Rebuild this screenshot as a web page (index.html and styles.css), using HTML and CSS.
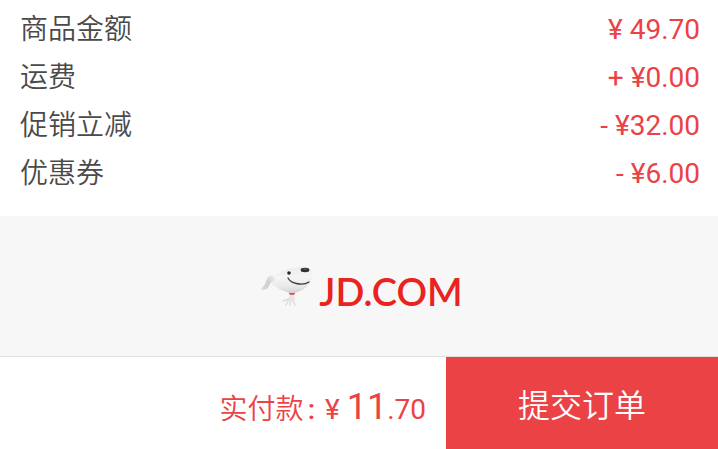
FILE: index.html
```html
<!DOCTYPE html>
<html lang="zh-CN">
<head>
<meta charset="utf-8">
<meta name="viewport" content="width=device-width, initial-scale=1">
<title>结算</title>
<link rel="stylesheet" href="styles.css">
</head>
<body>
<dl class="summary">
  <div class="row"><dt>商品金额</dt><dd>¥ 49.70</dd></div>
  <div class="row"><dt>运费</dt><dd>+ ¥0.00</dd></div>
  <div class="row"><dt>促销立减</dt><dd>- ¥32.00</dd></div>
  <div class="row"><dt>优惠券</dt><dd>- ¥6.00</dd></div>
</dl>
<div class="brand">
  <svg class="dog" viewBox="0 0 56 42" aria-hidden="true">
    <defs>
      <linearGradient id="body" x1="0.4" y1="0" x2="0.45" y2="1">
        <stop offset="0" stop-color="#ececec"/>
        <stop offset="0.4" stop-color="#f5f5f5"/>
        <stop offset="0.75" stop-color="#e9e9e9"/>
        <stop offset="1" stop-color="#d2d2d2"/>
      </linearGradient>
      <linearGradient id="ear" x1="1" y1="0" x2="0" y2="1">
        <stop offset="0" stop-color="#ececec"/>
        <stop offset="0.5" stop-color="#d0d0d0"/>
        <stop offset="1" stop-color="#d8d8d8"/>
      </linearGradient>
    </defs>
    <path d="M35 33L34 35L28 37M34 35L31 41M38 33L38 36L40 41M36 35L35 41" fill="none" stroke="#dcdcdc" stroke-width="1.4" stroke-linecap="round"/>
    <path d="M35 30H39L40 36H34Z" fill="#e5e5e5"/>
    <path d="M14 13C20 12 25 7 33 5C41 3 46 3 51 3C57 4 59 9 57 15C54 23 46 28 38 29C28 29 20 22 14 17Z" fill="url(#body)"/>
    <path d="M18 12C15 11 13 12 12 15C11 19 9 22 6 25C9 27 13 25 14 22C15 19 17 17 20 16Z" fill="url(#ear)"/>
    <ellipse cx="50" cy="6" rx="4.4" ry="2.2" fill="#303030"/>
    <ellipse cx="50" cy="5" rx="2.4" ry="0.4" fill="#777777"/>
    <circle cx="34" cy="9" r="1.8" fill="#262626"/>
    <path d="M33 14C36 20 48 22 54 18" fill="none" stroke="#383838" stroke-width="1.3" stroke-linecap="round"/>
    <path d="M34 28.5Q37 29.5 40 28.5L39.5 30.5Q37 31 34.5 30.5Z" fill="#df4448"/>
  </svg>
  <span class="wordmark">JD.COM</span>
</div>
<footer class="checkout">
  <p class="total">实付款<span class="colon">:</span><span class="price">¥ <span class="whole">11</span>.70</span></p>
  <button class="submit" type="button">提交订单</button>
</footer>
</body>
</html>
```
FILE: styles.css
```css
* {
  box-sizing: border-box;
}

body {
  display: flex;
  flex-direction: column;
  min-height: 100vh;
  margin: 0;
  background: #fff;
  color: #4a4a4a;
  font: 350 28px/48px Roboto, "Noto Sans CJK SC", sans-serif;
}

.summary {
  margin: 0;
  padding: 6px 18px 18px 20px;
}

.row {
  display: flex;
  justify-content: space-between;
}

.row dd {
  margin: 0;
  color: #eb4245;
  font-weight: 400;
}

.brand {
  display: flex;
  flex: 1;
  align-items: baseline;
  justify-content: center;
  gap: 8px;
  padding: 48px 4px 0;
  background: #f7f7f7;
}

.dog {
  width: 56px;
  height: 42px;
  overflow: visible;
}

.wordmark {
  color: #e92320;
  font: 600 38px/36px Lato, sans-serif;
}

.checkout {
  display: grid;
  grid-template-columns: 1fr 272px;
  border-top: 1px solid #dedede;
}

.total {
  margin: 0;
  padding: 26px 20px 15px 0;
  color: #eb4245;
  text-align: right;
}

.colon {
  margin: 0 10px 0 4px;
  font-weight: 500;
}

.price {
  font-weight: 400;
}

.whole {
  font-size: 36px;
}

.submit {
  padding: 0;
  border: 0;
  background: #eb4245;
  color: #fff;
  font: 350 32px/48px "Noto Sans CJK SC", sans-serif;
}
```
